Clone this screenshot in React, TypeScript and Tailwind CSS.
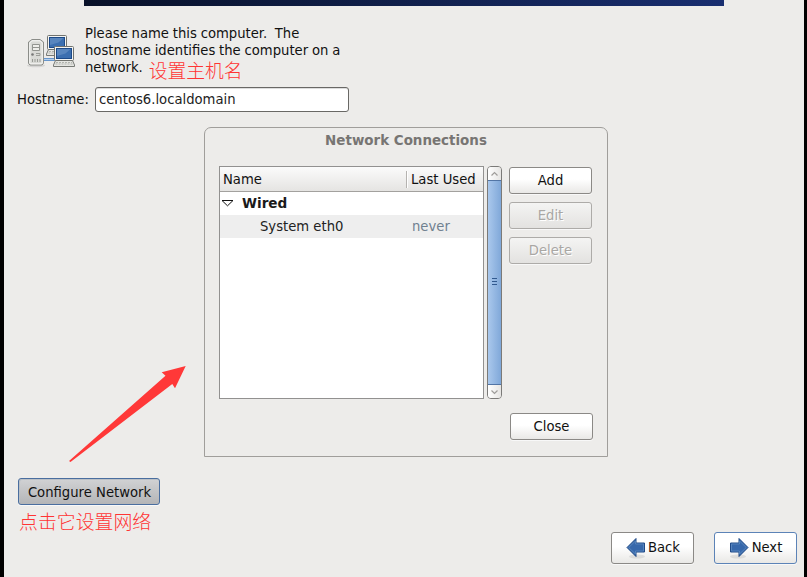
import React from 'react';

const raised = 'flex items-center justify-center rounded-[3px] border bg-linear-to-b from-white from-45% to-[#e9e8e6] shadow-[0_1px_0_#f8f8f8]';

function SideButton({ label, disabled }: { label: string; disabled?: boolean }) {
  return disabled ? (
    <button disabled className="flex h-[27px] w-[83px] items-center justify-center rounded-[3px] border border-[#adaba8] bg-linear-to-b from-[#f4f4f3] to-[#e3e2e0] text-[#a9a7a4] shadow-[0_1px_0_#f8f8f8] [text-shadow:1px_1px_0_#fff]">
      {label}
    </button>
  ) : (
    <button className={raised + ' h-[27px] w-[83px] border-[#8b8986]'}>{label}</button>
  );
}

function Monitor({ x, y }: { x: number; y: number }) {
  return (
    <g transform={`translate(${x} ${y})`}>
      <path d="M2.5 14.5h17l2 4.500v1.500H.5V19z" fill="#e4e5e1" stroke="#777975" />
      <path d="M3 16.500h16M2.5 18h17" stroke="#a5a7a2" strokeWidth=".8" strokeDasharray="2 1" />
      <rect x="1.5" y=".5" width="19" height="14" rx="1" fill="#f4f4f2" stroke="#71736f" />
      <rect x="3.5" y="2.5" width="15" height="10" fill="#3c6fb0" stroke="#1d4a88" />
      <path d="M4 3h13.500l-5 4.500L4 10z" fill="#7199ca" opacity=".55" />
    </g>
  );
}

function NetworkIcon() {
  return (
    <svg className="ml-[23px] mt-[8px] shrink-0" width="49" height="36" viewBox="0 0 49 36">
      <ellipse cx="9" cy="32.500" rx="9" ry="1.700" fill="#777" opacity=".2" />
      <path d="M1.500 9L5 6.500h8L16.500 9v21.500l-1.500 1.500H3l-1.500-1.500z" fill="#d9dad6" stroke="#8b8d89" />
      <path d="M2.800 9.800L5 7.800h8l2.200 2v20.200l-1 .8H3.800l-1-.8z" fill="none" stroke="#f7f7f5" />
      <path d="M5.500 11.500h7v6h-7zM5.500 14.500h7" fill="#eeeeea" stroke="#92948f" />
      <circle cx="5.500" cy="21.500" r="1.300" fill="#777" />
      <path d="M9 20.500h4v2H9M5.500 26v3m2.500-3v3m2.500-3v3m2.500-3v3" fill="none" stroke="#9a9c97" />
      <path d="M17 25.500h12M17 27.500h12" stroke="#6796cc" />
      <path d="M17 26.500h12" stroke="#b5d0ec" />
      <Monitor x={19} y={2} />
      <Monitor x={26} y={13} />
    </svg>
  );
}

function NavArrow({ back }: { back?: boolean }) {
  return (
    <svg width="20" height="22" viewBox="0 0 20 22" className={back ? 'ml-px' : '-scale-x-100'}>
      <ellipse cx="11" cy="19.500" rx="8" ry="2" fill="#777" opacity=".16" />
      <path d="M1 10.500L10 1.500V6h8.500v9H10v4.500z" fill="#3768ab" stroke="#204a87" strokeLinejoin="round" />
      <path d="M2.700 10.500L9.500 4v3h8v7h-8v3z" fill="none" stroke="#5d8ac0" strokeWidth=".8" />
    </svg>
  );
}

export default function App() {
  return (
    <div className="flex h-[577px] w-[807px] flex-col overflow-hidden border-r-[3px] border-l-4 border-black bg-[#edecea] font-['DejaVu_Sans','Noto_Sans_CJK_SC',sans-serif] text-[13.2px] leading-[17px] text-[#111]">
      <div className="ml-20 h-[6px] w-[640px] shrink-0 bg-linear-to-r from-[#081129] to-[#192e70]" />

      <header className="mt-[19px] flex h-[51px] shrink-0 [word-spacing:-0.4px]">
        <NetworkIcon />
        <div className="ml-[9px] whitespace-pre">
          <p>Please name this computer.  The</p>
          <p>hostname identifies the computer on a</p>
          <p className="flex">
            network.
            <span className="ml-[6px] mt-[3px] text-[18.8px] leading-5 font-light text-[#ff3434]">设置主机名</span>
          </p>
        </div>
      </header>

      <label className="mt-[11px] flex h-[25px] shrink-0 items-center pl-[13px]">
        <span className="w-[78px]">Hostname:</span>
        <input
          className="h-[25px] w-[254px] rounded-[3px] border border-[#696865] bg-white px-[3px] text-[#222] shadow-[inset_0_1px_0_#ddd] outline-none"
          defaultValue="centos6.localdomain"
        />
      </label>

      <main className="mt-[15px] flex h-[405px] shrink-0">
        <aside className="w-[200px] shrink-0 pt-[237px]">
          <svg className="ml-[64px] block" width="120" height="100" viewBox="0 0 120 100">
            <path d="M1 97L97.500 11.700L93.700 8.300L117.700 2L107 24.300L104.300 20L2.500 98z" fill="#ff3838" />
          </svg>
          <button className="mt-[14px] ml-[14px] flex h-[27px] w-[142px] items-center justify-center rounded-[3px] border border-[#4a6e9f] bg-linear-to-b from-[#d1d2d4] to-[#b4b5b7] pt-[2px] pl-px shadow-[inset_1px_1px_0_#bbc0c6,0_1px_0_#f8f8f8]">
            Configure Network
          </button>
          <p className="mt-[7px] ml-[15px] whitespace-nowrap text-[18.9px] font-light leading-5 text-[#ff3434]">点击它设置网络</p>
        </aside>

        <section className="h-[330px] w-[404px] rounded-t-[7px] border border-[#a09e9b]">
          <h1 className="mt-[4px] text-center text-[13.45px] font-bold text-[#777573]">Network Connections</h1>
          <div className="mt-[17px] ml-[14px] flex">
            <div className="h-[233px] w-[265px] border border-[#929190] bg-white">
              <div className="flex h-[25px] items-center border-b border-[#a3a19e] bg-linear-to-b from-[#fbfbfb] to-[#e5e4e2]">
                <span className="w-[186px] pl-[3px]">Name</span>
                <span className="h-[17px] w-px bg-[#b5b3b0]" />
                <span className="h-[17px] w-px bg-white" />
                <span className="pl-[3px] whitespace-nowrap">Last Used</span>
              </div>
              <div className="flex h-[23px] items-center text-[13.6px] font-bold text-[#1a1a1a]">
                <svg className="mr-[8px] mb-px ml-px" width="13" height="8" viewBox="0 0 13 8">
                  <path d="M1 1.500h11L6.500 6.800z" fill="white" stroke="#111" />
                </svg>
                Wired
              </div>
              <div className="flex h-[23px] items-center bg-[#eeeeee] text-[#222]">
                <span className="w-[192px] pl-[40px]">System eth0</span>
                <span className="text-[#708090]">never</span>
              </div>
            </div>

            <div className="ml-[3px] flex h-[233px] w-[15px] flex-col overflow-hidden rounded-[4px] border border-[#7b7a78]">
              <div className="flex h-[13px] shrink-0 items-center justify-center bg-linear-to-r from-white to-[#e6e5e3]">
                <svg width="9" height="6" viewBox="0 0 9 6"><path d="M1.500 4.500l3-3l3 3" fill="none" stroke="#9f9d9a" strokeWidth="1.200" /></svg>
              </div>
              <div className="-mx-px flex flex-1 flex-col items-center justify-center gap-[2px] border border-[#5275a5] bg-linear-to-r from-[#aac8ec] to-[#80a8d9] pb-[2px]">
                <i className="h-px w-[5px] bg-[#31598e]" />
                <i className="h-px w-[5px] bg-[#31598e]" />
                <i className="h-px w-[5px] bg-[#31598e]" />
              </div>
              <div className="flex h-[13px] shrink-0 items-center justify-center bg-linear-to-r from-white to-[#e6e5e3]">
                <svg width="9" height="6" viewBox="0 0 9 6"><path d="M1.500 1.500l3 3l3-3" fill="none" stroke="#9f9d9a" strokeWidth="1.200" /></svg>
              </div>
            </div>

            <div className="mt-px ml-[7px] flex flex-col gap-2">
              <SideButton label="Add" />
              <SideButton label="Edit" disabled />
              <SideButton label="Delete" disabled />
            </div>
          </div>
          <div className="mt-[14px] flex justify-end pr-[14px]"><SideButton label="Close" /></div>
        </section>
      </main>

      <footer className="flex shrink-0 justify-end gap-[20px] pr-[7px]">
        <button className={raised + ' h-[32px] w-[83px] gap-[2px] border-[#8b8986]'}><NavArrow back /><span className="pb-[2px]">Back</span></button>
        <button className={raised + ' h-[32px] w-[83px] gap-[3px] border-[#5c83b7]'}><NavArrow /><span className="pb-[2px]">Next</span></button>
      </footer>
    </div>
  );
}
